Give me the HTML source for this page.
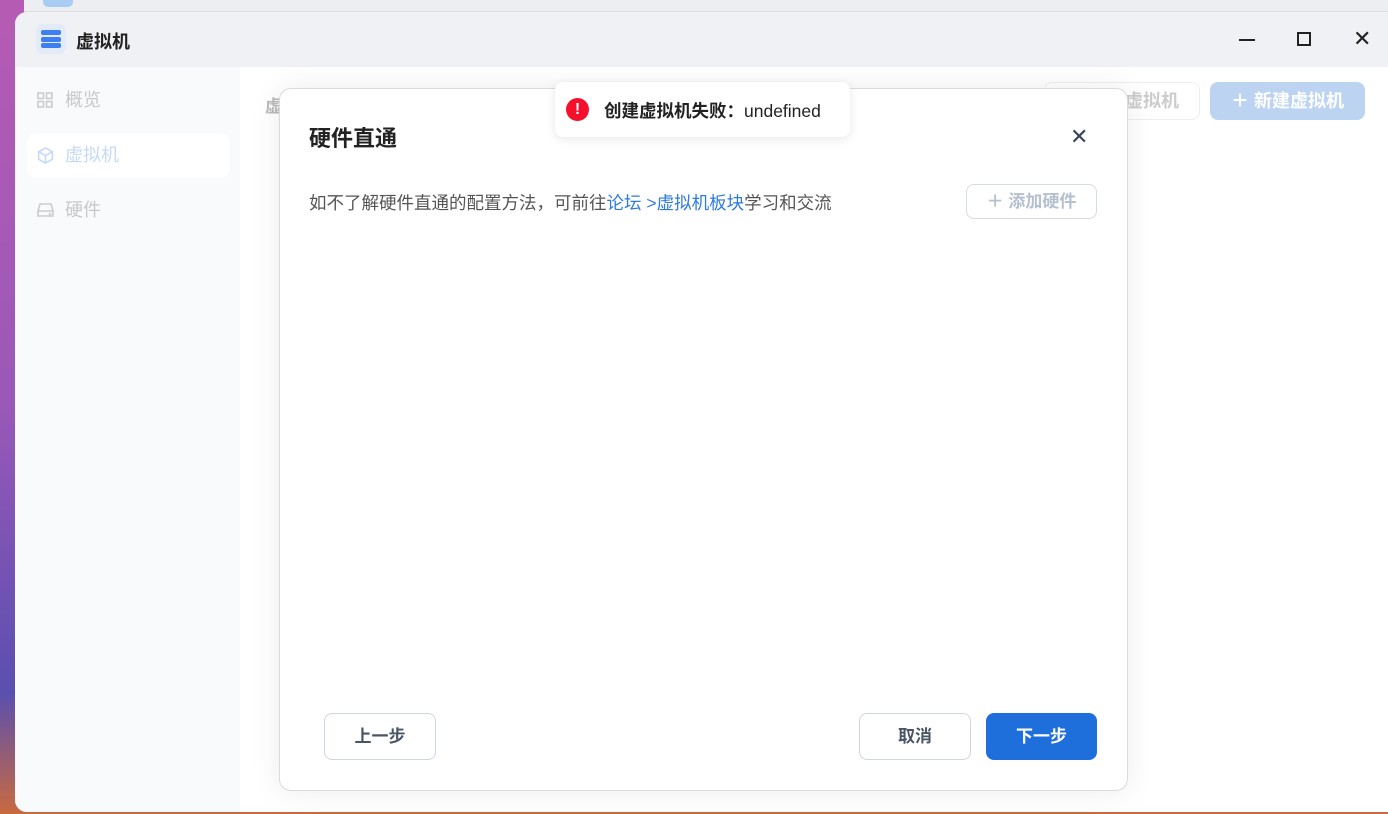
<!DOCTYPE html>
<html><head><meta charset="utf-8"><style>
*{box-sizing:border-box;margin:0;padding:0}
body{width:1388px;height:814px;overflow:hidden;position:relative;font-family:"Liberation Sans","Noto Sans CJK SC",sans-serif;background:linear-gradient(180deg,#b65bb4 0%,#9a58b8 50%,#5a4fb0 85%,#c86a40 100%)}
.top{position:absolute;left:24px;top:0;width:1364px;height:12px;background:#eceef2;border-bottom:1px solid #ddd}
.topicon{position:absolute;left:43px;top:-8px;width:30px;height:15px;border-radius:5px;background:#a9cdf2}
.win{position:absolute;left:15px;top:12px;width:1373px;height:800px;border-radius:12px 0 0 12px;overflow:hidden;background:#fff}
.title{height:55px;background:#f0f1f4;position:relative}
.logo{position:absolute;left:21px;top:12px;width:30px;height:30px;border-radius:7px;background:#e3ebf8}
.logo i{position:absolute;left:5px;width:20px;height:5px;border-radius:2px;background:#3d7ef0}
.ttext{position:absolute;left:61px;top:16px;font-size:18px;font-weight:bold;color:#222}
.side{position:absolute;left:0;top:55px;width:225px;height:745px;background:#f9fafc}
.item{position:absolute;left:12px;width:203px;height:45px;border-radius:10px;font-size:18px;color:#c8c8c8;padding-left:38px;line-height:45px}
.item svg{position:absolute;left:10px;top:14px}
.modal{position:absolute;left:279px;top:88px;width:849px;height:703px;background:#fff;border-radius:12px;border:1px solid #d8dbe0;box-shadow:0 0 30px rgba(0,0,0,.08)}
.btn{position:absolute;height:47px;border-radius:8px;border:1px solid #cdd6e2;font-size:17px;font-weight:bold;color:#4a5566;text-align:center;line-height:45px;background:#fff}
</style></head><body>
<div class="top"></div><div class="topicon"></div>
<div class="win">
 <div class="title">
  <div class="logo"><i style="top:6px"></i><i style="top:12.5px"></i><i style="top:19px"></i></div>
  <div class="ttext">虚拟机</div>
  <div style="position:absolute;left:1224px;top:27px;width:16px;height:2px;background:#222"></div>
  <div style="position:absolute;left:1282px;top:20px;width:14px;height:14px;border:2px solid #222"></div>
  <div style="position:absolute;left:1338px;top:17px;font-size:22px;color:#222;line-height:20px">✕</div>
 </div>
 <div class="side">
  <div class="item" style="top:11px"><svg width="16" height="16" viewBox="0 0 16 16" fill="none" stroke="#ccc" stroke-width="1.6"><rect x="1" y="1" width="5.5" height="5.5"/><rect x="9.5" y="1" width="5.5" height="5.5"/><rect x="1" y="9.5" width="5.5" height="5.5"/><rect x="9.5" y="9.5" width="5.5" height="5.5"/></svg>概览</div>
  <div class="item" style="top:66px;background:#fff;color:#c4daf6"><svg width="17" height="17" viewBox="0 0 16 16" fill="none" stroke="#c4daf6" stroke-width="1.5"><path d="M8 1l6.5 3.5v7L8 15l-6.5-3.5v-7z M1.5 4.5L8 8l6.5-3.5 M8 8v7"/></svg>虚拟机</div>
  <div class="item" style="top:121px"><svg width="17" height="16" viewBox="0 0 17 16" fill="none" stroke="#ccc" stroke-width="1.6"><path d="M3 2h11l2 7v5H1V9z M1 9h15"/><circle cx="13" cy="12" r=".5"/></svg>硬件</div>
 </div>
 <div style="position:absolute;left:250px;top:80px;font-size:17px;font-weight:bold;color:#bbb">虚</div>
 <div style="position:absolute;left:1029px;top:70px;width:156px;height:38px;border:1px solid #eee;border-radius:8px;font-size:18px;font-weight:bold;color:#ccc;line-height:36px;text-align:right;padding-right:20px">虚拟机</div>
 <div style="position:absolute;left:1195px;top:70px;width:155px;height:38px;border-radius:8px;background:#bcd4f2;font-size:18px;font-weight:bold;color:#fff;line-height:38px;text-align:center">＋&nbsp;新建虚拟机</div>
</div>
<div class="modal">
 <div style="position:absolute;left:29px;top:32px;font-size:22px;font-weight:bold;color:#222">硬件直通</div>
 <div style="position:absolute;left:790px;top:37px;font-size:22px;color:#3a4555;line-height:22px">✕</div>
 <div style="position:absolute;left:29px;top:101px;font-size:17.5px;color:#555">如不了解硬件直通的配置方法，可前往<span style="color:#2d7ae0">论坛 &gt;虚拟机板块</span>学习和交流</div>
 <div class="btn" style="left:686px;top:95px;width:131px;height:35px;line-height:33px;color:#b4c0d0;border-color:#d5dce6">＋&nbsp;添加硬件</div>
 <div class="btn" style="left:44px;top:624px;width:112px">上一步</div>
 <div class="btn" style="left:579px;top:624px;width:112px">取消</div>
 <div class="btn" style="left:706px;top:624px;width:111px;background:#1e6fdc;border-color:#1e6fdc;color:#fff">下一步</div>
</div>
<div style="position:absolute;left:555px;top:82px;width:295px;height:55px;background:#fff;border-radius:8px;box-shadow:0 2px 10px rgba(0,0,0,.1)">
 <div style="position:absolute;left:11px;top:16px;width:23px;height:23px;border-radius:50%;background:#f5102c;color:#fff;font-weight:bold;text-align:center;line-height:23px;font-size:16px">!</div>
 <div style="position:absolute;left:49px;top:16px;font-size:17.5px;color:#222"><b>创建虚拟机失败：</b>undefined</div>
</div>
</body></html>
